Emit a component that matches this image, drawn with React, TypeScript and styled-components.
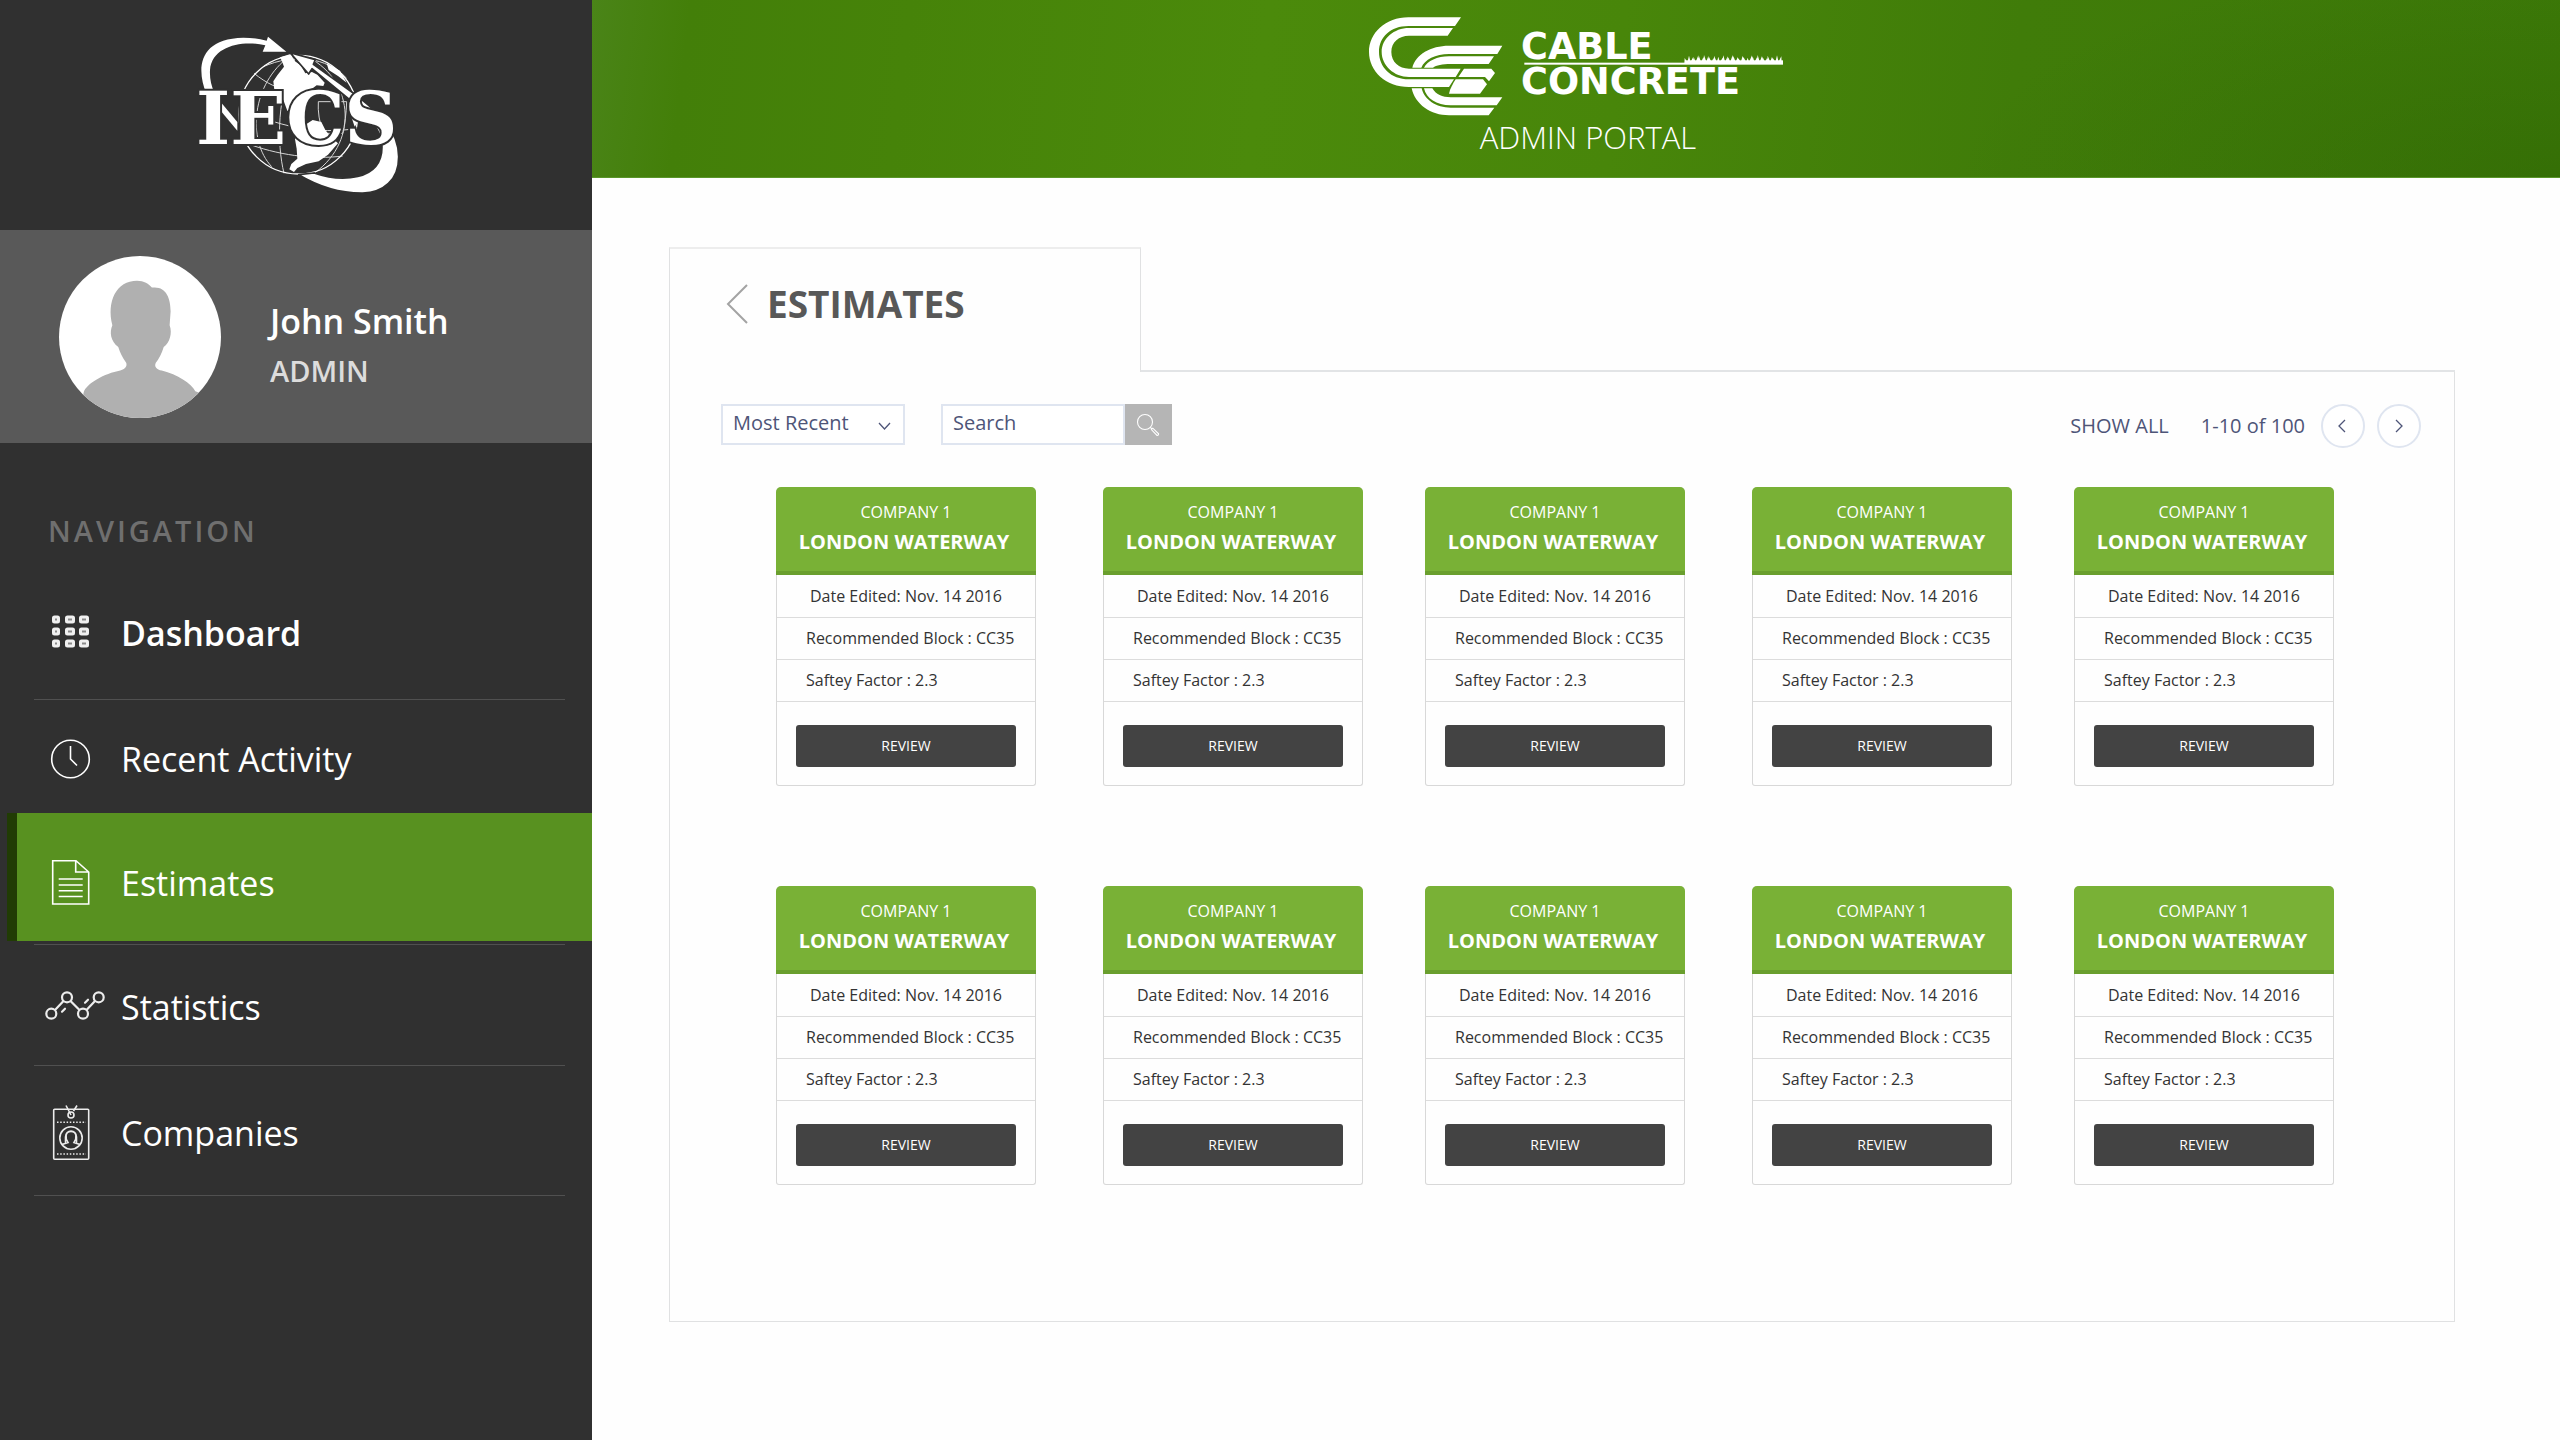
import React from "react";
import styled, { createGlobalStyle } from "styled-components";

const sans = '"Open Sans", "Noto Sans", sans-serif';

const GlobalStyle = createGlobalStyle`
  * { box-sizing: border-box; }
  body {
    margin: 0;
    background: #fefefe;
    font-family: ${sans};
  }
  button, input, select { font-family: inherit; }
  ul { list-style: none; margin: 0; padding: 0; }
  h1, h2, p { margin: 0; }
  svg { display: block; flex: none; }
`;

const Page = styled.div`
  display: grid;
  grid-template-columns: 592px minmax(0, 1fr);
  min-height: 100vh;
`;

/* ---------- Sidebar ---------- */

const Sidebar = styled.aside`
  background: #303030;
  color: #fff;
`;

const Brand = styled.div`
  height: 230px;
  padding: 20px 0 0 8px;
  display: flex;
  justify-content: center;
`;

const Profile = styled.section`
  display: flex;
  align-items: center;
  gap: 49px;
  height: 213px;
  padding: 0 59px;
  background: #595959;
`;

const ProfileText = styled.div`
  padding-top: 19px;
`;

const ProfileName = styled.p`
  font-size: 34px;
  line-height: 50px;
  font-weight: 600;
`;

const ProfileRole = styled.p`
  font-size: 29px;
  line-height: 50px;
  font-weight: 600;
  color: #dcdcdc;
`;

const NavHeading = styled.h2`
  padding: 68px 48px 11px;
  font-size: 29px;
  line-height: 40px;
  font-weight: 600;
  letter-spacing: 3px;
  color: #6f6f6f;
`;

const NavItem = styled.li<{ $ruled?: boolean }>`
  &::after {
    content: "";
    display: ${(p) => (p.$ruled ? "block" : "none")};
    height: 1px;
    margin: 0 27px 0 34px;
    background: #505050;
  }
`;

const NavLink = styled.a<{ $height: number; $active?: boolean; $strong?: boolean }>`
  display: flex;
  align-items: center;
  gap: 16px;
  height: ${(p) => p.$height}px;
  margin: ${(p) => (p.$active ? "0 0 3px 7px" : "0")};
  padding: ${(p) => (p.$active ? "12px 0 0 28px" : "4px 0 0 45px")};
  border-left: ${(p) => (p.$active ? "10px solid #213c04" : "0")};
  background: ${(p) => (p.$active ? "#589120" : "transparent")};
  color: #fff;
  font-size: 34px;
  line-height: 48px;
  font-weight: ${(p) => (p.$strong ? 600 : 400)};
  text-decoration: none;
`;

/* ---------- Header ---------- */

const Main = styled.div`
  display: flex;
  flex-direction: column;
`;

const Header = styled.header`
  display: flex;
  flex-direction: column;
  align-items: center;
  height: 178px;
  padding-top: 17px;
  border-bottom: 1px solid #5a962a;
  background:
    radial-gradient(ellipse 600px 220px at 100% 100%, rgba(40, 92, 2, 0.35), rgba(40, 92, 2, 0)),
    linear-gradient(97deg, #4a8418 0%, #437f09 5%, #468309 16%, #4b8a0b 34%, #48860a 52%, #407c09 72%, #3c7908 100%);
  color: #fff;
`;

const PortalName = styled.p`
  padding-left: 24px;
  font-size: 31px;
  line-height: 42px;
  font-weight: 300;
`;

/* ---------- Content panel ---------- */

const Content = styled.main`
  flex: 1;
  display: flex;
  flex-direction: column;
  padding: 69px 105px 118px 77px;
`;

const TabRow = styled.div`
  display: flex;
  height: 125px;
`;

const Tab = styled.div`
  display: flex;
  align-items: flex-start;
  gap: 19px;
  width: 472px;
  padding: 31px 0 0 56px;
  border: 1px solid #e0e1e2;
  border-top: 2px solid #ededed;
  border-bottom: 0;
`;

const TabRest = styled.div`
  flex: 1;
  border-bottom: 2px solid #e2e4e6;
`;

const BackButton = styled.button`
  padding: 4px 0;
  border: 0;
  background: none;
`;

const Title = styled.h1`
  font-size: 37px;
  line-height: 48px;
  font-weight: 700;
  color: #585858;
`;

const Panel = styled.section`
  flex: 1;
  padding: 32px 33px 120px 51px;
  border: solid #e0e1e2;
  border-width: 0 1px 1px;
`;

const Toolbar = styled.div`
  display: flex;
  align-items: flex-start;
  color: #4e5578;
  font-size: 20px;
`;

const SelectBox = styled.div`
  display: grid;
  grid-template-columns: 184px;
  align-items: center;
  justify-items: end;
  margin-right: 36px;

  > * { grid-area: 1 / 1; }
  > svg { margin-right: 10px; pointer-events: none; }
`;

const field = `
  width: 184px;
  height: 41px;
  padding: 0 10px 4px;
  border: 2px solid #dfe5f0;
  border-radius: 0;
  background: #fff;
  color: #4e5578;
  font-size: 20px;
  line-height: 28px;
`;

const Select = styled.select`
  ${field}
  appearance: none;
`;

const SearchInput = styled.input`
  ${field}
  &::placeholder { color: #4e5578; opacity: 1; }
`;

const SearchForm = styled.form`
  display: flex;
`;

const SearchButton = styled.button`
  display: grid;
  place-items: center;
  width: 47px;
  height: 41px;
  padding: 0 2px 0 0;
  border: 0;
  background: #b5b5b5;
`;

const Pager = styled.nav`
  display: flex;
  align-items: center;
  gap: 12px;
  margin-left: auto;
  line-height: 28px;
`;

const ShowAll = styled.a`
  margin-right: 20px;
  color: inherit;
  text-decoration: none;
`;

const PageRange = styled.span`
  margin-right: 4px;
`;

const PageButton = styled.button`
  display: grid;
  place-items: center;
  width: 44px;
  height: 44px;
  padding: 0;
  border: 2px solid #dfe5f0;
  border-radius: 50%;
  background: #fff;
`;

/* ---------- Estimate cards ---------- */

const CardGrid = styled.ul`
  display: grid;
  grid-template-columns: repeat(2, 327fr 322fr) 260px;
  row-gap: 100px;
  padding: 39px 87px 0 55px;
`;

const Card = styled.li`
  width: 260px;
  height: 299px;
  border: 1px solid #d8d8d8;
  border-top: 0;
  border-radius: 5px 5px 3px 3px;
  color: #333;
`;

const CardHead = styled.div`
  height: 88px;
  margin: 0 -1px;
  padding-top: 13px;
  border-bottom: 4px solid #6a9f2e;
  border-radius: 5px 5px 0 0;
  background: #79b136;
  color: #fff;
  text-align: center;
`;

const Company = styled.p`
  font-size: 16px;
  line-height: 24px;
`;

const Project = styled.h2`
  padding-right: 4px;
  font-size: 20px;
  line-height: 36px;
  font-weight: 700;
`;

const Facts = styled.div`
  padding-top: 1px;
`;

const Fact = styled.p<{ $centered?: boolean }>`
  height: 42px;
  padding: ${(p) => (p.$centered ? "0" : "0 0 0 29px")};
  border-bottom: 1px solid #dcdcdc;
  font-size: 16px;
  line-height: 40px;
  text-align: ${(p) => (p.$centered ? "center" : "left")};
  white-space: nowrap;
`;

const ReviewButton = styled.button`
  display: block;
  width: 220px;
  height: 42px;
  margin: 23px auto 0;
  padding: 0 0 2px;
  border: 0;
  border-radius: 3px;
  background: #434343;
  color: #fff;
  font-size: 14px;
`;

/* ---------- Drawings ---------- */

const IecsLogo = () => (
  <svg width="240" height="190" viewBox="0 0 720 570" role="img" aria-label="IECS">
    <g fill="none" stroke="#fff" strokeWidth="4">
      <circle cx="355" cy="284" r="178" />
      <g strokeWidth="3" opacity="0.8">
        <path d="M330 108C215 190 200 360 275 440" />
        <path d="M350 106C290 220 290 370 312 460" />
        <path d="M372 106C520 170 540 360 405 458" />
        <path d="M222 160C260 190 290 205 340 215" />
        <path d="M180 260C280 320 420 345 530 325" />
        <path d="M195 368C290 405 400 420 488 408" />
        <path d="M250 140C340 100 440 110 500 175" />
        <path d="M415 245H500Q498 300 488 340H430Q412 290 415 245" />
      </g>
    </g>
    <g fill="#fff">
      <path d="M300 112 332 102 345 124 362 136 376 160 396 156 412 164 434 188 430 198 410 196 394 208 378 228 356 236 338 240 346 258 344 280 322 272 310 240 284 218 280 184 292 166 312 140 306 124Z" />
      <path d="M345 358 352 330 398 300 424 306 436 330 452 350 474 370 444 404 416 424 378 432 352 444 342 456 328 448 334 432 352 416 350 386Z" />
      <path d="M440 130 480 152 500 188 474 168 446 150Z" />
      <path d="M512 240 534 244 538 300 524 320 514 290Z" />
      <path d="M79 220C50 150 52 56 190 53Q226 53 260 62L264 50 319 95 248 95 256 76C190 60 96 76 90 150Q88 186 104 220Z" />
    </g>
    <path
      d="M330 98 406 119 400 133 532 228C600 282 655 330 656 410C656 480 610 518 548 519Q450 520 356 464L402 459C480 486 606 486 606 380C606 330 560 280 510 240L396 146 386 162Z"
      fill="#fff"
      stroke="#303030"
      strokeWidth="5"
      strokeLinejoin="round"
    />
    <path d="M122 246 172 306V332L122 272Z" fill="#fff" />
    <text
      x="48"
      y="371"
      fill="#fff"
      stroke="#303030"
      strokeWidth="12"
      paintOrder="stroke"
      fontFamily='"DejaVu Serif", serif'
      fontWeight="700"
      fontSize="220"
    >
      IECS
    </text>
  </svg>
);

const grassBlades = Array.from({ length: 36 }, (_, i) => {
  const x = 1012 + i * 8;
  const height = 15 + ((i * 7) % 10);
  const lean = ((i * 5) % 11) - 5;
  return `M${x - 6} 190L${x + lean} ${188 - height}L${x + 6} 190Z`;
}).join("");

const CableConcreteLogo = () => (
  <svg width="415" height="99" viewBox="60 50 1245 297" role="img" aria-label="Cable Concrete">
    <g fill="#fff">
      <path d="M336 51H178C110 51 60 98 60 155S110 260 180 260H300L315 237H180C125 237 90 200 90 155S125 77 178 77H318Z" />
      <path d="M312 83H180C135 83 98 115 98 155S135 230 180 230H320L335 205H180C150 205 127 185 127 155S150 106 180 106H296Z" />
      <path d="M460 136H300C245 136 200 162 190 202H217C226 178 260 161 300 161H445Z" />
      <path d="M435 168H300C265 168 235 182 225 202H252C262 195 280 191 305 191H419Z" />
      <path d="M188 264H218C225 298 262 322 305 322H436L419 345H300C245 345 198 312 188 264Z" />
      <path d="M225 264H250C260 282 280 291 305 291H460L443 315H305C262 315 232 295 225 264Z" />
      <path d="M345 205H427L438 218 420 243 408 230H328Z" />
      <path d="M320 237H402L414 252 393 280H300C303 265 312 250 320 237Z" />
      <rect x="526" y="187" width="776" height="6" />
      <rect x="1008" y="180" width="294" height="9" />
      <path d={grassBlades} />
      <g fontFamily='"DejaVu Sans", sans-serif' fontWeight="700" fontSize="110">
        <text x="516" y="177">CABLE</text>
        <text x="516" y="281">CONCRETE</text>
      </g>
    </g>
  </svg>
);

const Avatar = () => (
  <svg width="162" height="162" viewBox="0 0 164 164" role="img" aria-label="John Smith">
    <clipPath id="avatar-circle">
      <circle cx="82" cy="82" r="82" />
    </clipPath>
    <g clipPath="url(#avatar-circle)">
      <rect width="164" height="164" fill="#fff" />
      <path
        fill="#b0b0b0"
        d="M79 25C86 25 91 28 94 32C108 30 113 42 113 56L112 70C115 78 112 88 106 92C104 99 101 104 98 108C96 112 99 115 104 116C120 120 134 129 138 137L146 140V164H20L25 138C28 129 46 119 62 116C68 114 69 111 68 108C64 102 62 98 60 92C52 86 51 77 54 70C48 46 58 25 79 25Z"
      />
    </g>
  </svg>
);

const NavIcon = ({ children }: { children: React.ReactNode }) => (
  <svg width="60" height="58" viewBox="0 0 60 58" fill="none" stroke="#fff" strokeWidth="1.6" aria-hidden="true">
    {children}
  </svg>
);

const GridIcon = () => (
  <NavIcon>
    <g strokeWidth="3" stroke="#f0f0f0" fill="#8a8a8a">
      {[13, 25, 37].map((y) =>
        [8.5, 21.5, 35.5].map((x, i) => (
          <rect key={`${x}-${y}`} x={x} y={y} width={i === 0 ? 5 : 7} height="5" rx="1" />
        ))
      )}
    </g>
  </NavIcon>
);

const ClockIcon = () => (
  <NavIcon>
    <circle cx="25.5" cy="29" r="18.8" />
    <path d="M25.5 16V29L32 35.5" />
  </NavIcon>
);

const DocumentIcon = () => (
  <NavIcon>
    <path d="M7.7 6.7H31L43.7 18V50H7.7ZM30.7 6.7V18H43.7M13.7 25H37.7M13.7 31H37.7M13.7 36.7H37.7M13.7 42.5H37.7" />
  </NavIcon>
);

const ChartIcon = () => (
  <NavIcon>
    <g stroke="#ececec" strokeWidth="2.2">
      <circle cx="6.3" cy="35.7" r="5" />
      <circle cx="22" cy="19.3" r="5" />
      <circle cx="38" cy="35.7" r="5" />
      <circle cx="53.7" cy="19.3" r="5" />
      <path d="M10 32L18.5 23M25.5 23L34.5 32M41.5 32L50 23" />
      <path d="M17 33.7L20 30.7M40 24.7L43 21.7" strokeLinecap="round" />
    </g>
  </NavIcon>
);

const BadgeIcon = () => (
  <NavIcon>
    <g stroke="#ececec">
      <rect x="8.7" y="5.3" width="35" height="50" rx="1" />
      <circle cx="26" cy="11" r="3" />
      <path d="M21 1.5L26 11M32 1.5L28.5 7" />
      <path d="M12 18.3H41M12 50H41" strokeDasharray="1.5 1.7" />
      <circle cx="26" cy="34" r="11.2" />
      <path d="M17 40.5L23 38.5C20 34 20 27.5 26 27.5S32 34 29 38.5L35 40.5M20.5 39.5V33C20.5 25 31.5 25 31.5 33V39.5" />
    </g>
  </NavIcon>
);

const SmallChevron = ({ direction }: { direction: "left" | "right" | "down" }) => {
  const paths = {
    left: "M12 4L6 10L12 16",
    right: "M7 4L13 10L7 16",
    down: "M4 8L9.5 14L15 8",
  };
  return (
    <svg width="20" height="20" viewBox="0 0 20 20" fill="none" stroke="#4e5578" strokeWidth="1.3" aria-hidden="true">
      <path d={paths[direction]} />
    </svg>
  );
};

/* ---------- Data ---------- */

const navigation = [
  { label: "Dashboard", icon: <GridIcon />, height: 137, strong: true, ruled: true },
  { label: "Recent Activity", icon: <ClockIcon />, height: 113 },
  { label: "Estimates", icon: <DocumentIcon />, height: 128, active: true, ruled: true },
  { label: "Statistics", icon: <ChartIcon />, height: 120, ruled: true },
  { label: "Companies", icon: <BadgeIcon />, height: 129, ruled: true },
];

const estimates = Array.from({ length: 10 }, (_, id) => ({
  id,
  company: "COMPANY 1",
  project: "LONDON WATERWAY",
  edited: "Nov. 14 2016",
  block: "CC35",
  safety: "2.3",
}));

export default function App() {
  return (
    <Page>
      <GlobalStyle />
      <Sidebar>
        <Brand>
          <IecsLogo />
        </Brand>
        <Profile>
          <Avatar />
          <ProfileText>
            <ProfileName>John Smith</ProfileName>
            <ProfileRole>ADMIN</ProfileRole>
          </ProfileText>
        </Profile>
        <nav aria-labelledby="nav-heading">
          <NavHeading id="nav-heading">NAVIGATION</NavHeading>
          <ul>
            {navigation.map((item) => (
              <NavItem key={item.label} $ruled={item.ruled}>
                <NavLink
                  href="#"
                  $height={item.height}
                  $active={item.active}
                  $strong={item.strong}
                  aria-current={item.active ? "page" : undefined}
                >
                  {item.icon}
                  {item.label}
                </NavLink>
              </NavItem>
            ))}
          </ul>
        </nav>
      </Sidebar>
      <Main>
        <Header>
          <CableConcreteLogo />
          <PortalName>ADMIN PORTAL</PortalName>
        </Header>
        <Content>
          <TabRow>
            <Tab>
              <BackButton type="button" aria-label="Back">
                <svg width="22" height="40" viewBox="0 0 22 40" fill="none" stroke="#a3a3a3" strokeWidth="2">
                  <path d="M21 1L2 20L21 39" />
                </svg>
              </BackButton>
              <Title>ESTIMATES</Title>
            </Tab>
            <TabRest />
          </TabRow>
          <Panel>
            <Toolbar>
              <SelectBox>
                <Select aria-label="Sort order" defaultValue="recent">
                  <option value="recent">Most Recent</option>
                </Select>
                <SmallChevron direction="down" />
              </SelectBox>
              <SearchForm role="search" onSubmit={(e) => e.preventDefault()}>
                <SearchInput type="text" aria-label="Search" placeholder="Search" />
                <SearchButton type="submit" aria-label="Search">
                  <svg width="24" height="24" viewBox="0 0 24 24" fill="none" stroke="#fff" strokeWidth="1.1">
                    <circle cx="9" cy="9" r="7.5" />
                    <path d="M14.3 14.3L16 16M15.4 16.6L16.8 15.2L22.6 20.8Q22.6 22.6 21 22.4Z" />
                  </svg>
                </SearchButton>
              </SearchForm>
              <Pager aria-label="Pages">
                <ShowAll href="#">SHOW ALL</ShowAll>
                <PageRange>1-10 of 100</PageRange>
                <PageButton type="button" aria-label="Previous page">
                  <SmallChevron direction="left" />
                </PageButton>
                <PageButton type="button" aria-label="Next page">
                  <SmallChevron direction="right" />
                </PageButton>
              </Pager>
            </Toolbar>
            <CardGrid>
              {estimates.map((e) => (
                <Card key={e.id}>
                  <CardHead>
                    <Company>{e.company}</Company>
                    <Project>{e.project}</Project>
                  </CardHead>
                  <Facts>
                    <Fact $centered>Date Edited: {e.edited}</Fact>
                    <Fact>Recommended Block : {e.block}</Fact>
                    <Fact>Saftey Factor : {e.safety}</Fact>
                  </Facts>
                  <ReviewButton type="button">REVIEW</ReviewButton>
                </Card>
              ))}
            </CardGrid>
          </Panel>
        </Content>
      </Main>
    </Page>
  );
}
